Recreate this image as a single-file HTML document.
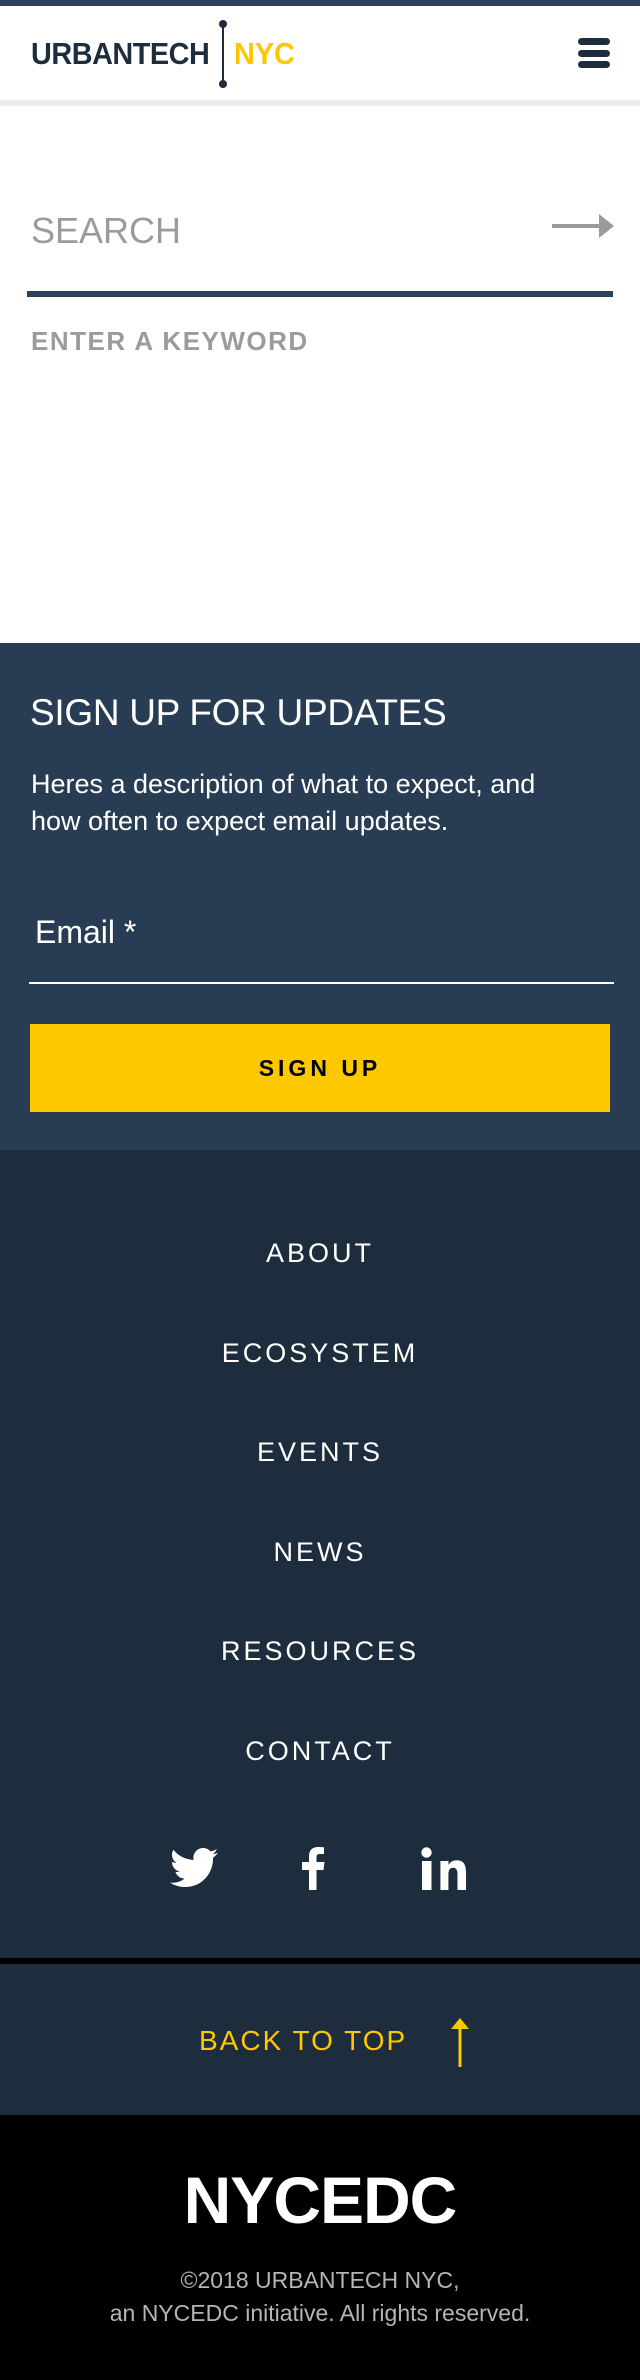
<!DOCTYPE html>
<html><head><meta charset="utf-8">
<style>
*{margin:0;padding:0;box-sizing:border-box}
body{width:640px;height:2380px;font-family:"Liberation Sans",sans-serif;background:#fff;position:relative;overflow:hidden}
.abs{position:absolute}
</style></head><body>
<div class="abs" style="left:0;top:0;width:640px;height:6px;background:#2a4158"></div>
<div class="abs" style="left:0;top:100px;width:640px;height:6px;background:#ebecee"></div>
<div class="abs" style="left:31px;top:36px;font-size:31px;font-weight:bold;color:#1d2d3d;letter-spacing:-0.5px;transform:scaleX(0.93);transform-origin:left">URBANTECH</div>
<div class="abs" style="left:222px;top:22px;width:2px;height:66px;background:#1d2d3d"></div>
<div class="abs" style="left:219px;top:20px;width:8px;height:8px;border-radius:50%;background:#1d2d3d"></div>
<div class="abs" style="left:219px;top:80px;width:8px;height:8px;border-radius:50%;background:#1d2d3d"></div>
<div class="abs" style="left:234px;top:36px;font-size:31px;font-weight:bold;color:#fdc800;transform:scaleX(0.93);transform-origin:left">NYC</div>
<div class="abs" style="left:578px;top:38px;width:32px;height:7px;border-radius:4px;background:#1d2d3d"></div>
<div class="abs" style="left:578px;top:50px;width:32px;height:7px;border-radius:4px;background:#1d2d3d"></div>
<div class="abs" style="left:578px;top:61px;width:32px;height:7px;border-radius:4px;background:#1d2d3d"></div>

<div class="abs" style="left:31px;top:210px;font-size:36px;color:#9b9b9b">SEARCH</div>
<svg class="abs" style="left:552px;top:212px" width="62" height="28"><line x1="0" y1="14" x2="50" y2="14" stroke="#9b9b9b" stroke-width="4"/><polygon points="47,2 62,14 47,26" fill="#9b9b9b"/></svg>
<div class="abs" style="left:27px;top:291px;width:586px;height:6px;background:#2a4158"></div>
<div class="abs" style="left:31px;top:326px;font-size:26px;font-weight:bold;color:#9b9b9b;letter-spacing:1.5px">ENTER A KEYWORD</div>

<div class="abs" style="left:0;top:643px;width:640px;height:507px;background:#283d54"></div>
<div class="abs" style="left:30px;top:692px;font-size:37px;color:#fff;letter-spacing:-0.3px">SIGN UP FOR UPDATES</div>
<div class="abs" style="left:31px;top:766px;width:540px;font-size:27px;line-height:37px;color:#fff">Heres a description of what to expect, and how often to expect email updates.</div>
<div class="abs" style="left:35px;top:914px;font-size:32px;color:#fff">Email *</div>
<div class="abs" style="left:29px;top:982px;width:585px;height:2px;background:#fff"></div>
<div class="abs" style="left:30px;top:1024px;width:580px;height:88px;background:#fdc800;text-align:center;line-height:88px;font-size:23px;font-weight:bold;letter-spacing:4px;color:#000">SIGN UP</div>

<div class="abs" style="left:0;top:1150px;width:640px;height:808px;background:#1d2d3d"></div>
<div class="abs" style="left:0;top:1235px;width:640px;text-align:center;color:#fff;font-size:27px;letter-spacing:3px">
<div style="height:99.6px;line-height:36px">ABOUT</div>
<div style="height:99.6px;line-height:36px">ECOSYSTEM</div>
<div style="height:99.6px;line-height:36px">EVENTS</div>
<div style="height:99.6px;line-height:36px">NEWS</div>
<div style="height:99.6px;line-height:36px">RESOURCES</div>
<div style="height:99.6px;line-height:36px">CONTACT</div>
</div>
<svg class="abs" style="left:170px;top:1848px" width="48" height="40" viewBox="0 0 24 20"><path fill="#fff" d="M24 2.4c-.9.4-1.8.6-2.8.8 1-.6 1.8-1.6 2.2-2.7-1 .6-2 1-3.1 1.2C19.3.6 18 0 16.6 0c-2.7 0-4.9 2.2-4.9 4.9 0 .4 0 .8.1 1.1C7.7 5.8 4.1 3.9 1.7.9c-.4.7-.7 1.6-.7 2.5 0 1.7.9 3.2 2.2 4.1-.8 0-1.6-.2-2.2-.6v.1c0 2.4 1.7 4.4 3.9 4.8-.4.1-.8.2-1.3.2-.3 0-.6 0-.9-.1.6 2 2.4 3.4 4.6 3.4-1.7 1.3-3.8 2.1-6.1 2.1-.4 0-.8 0-1.2-.1C2.2 18.7 4.8 19.5 7.5 19.5c9.1 0 14-7.5 14-14v-.6c1-.7 1.8-1.6 2.5-2.5z"/></svg>
<svg class="abs" style="left:302px;top:1847px" width="25" height="43" viewBox="0 0 25 43"><path fill="#fff" d="M7 43V23H0v-8h7V9c0-6 3.5-9 9-9 2.5 0 5 .2 6 .3V7h-4c-3 0-3.5 1.4-3.5 3.5V15h8l-1 8h-7v20z"/></svg>
<svg class="abs" style="left:421px;top:1847px" width="50" height="43" viewBox="0 0 50 43"><circle cx="5.5" cy="5.5" r="5.2" fill="#fff"/><rect x="1" y="14" width="9.5" height="29" fill="#fff"/><path fill="#fff" d="M16 14h9v4c1.5-2.6 4.5-4.8 9-4.8 9 0 10.5 5.8 10.5 13.5V43H35V28.5c0-3.4-.1-7.7-4.7-7.7-4.7 0-5.4 3.6-5.4 7.5V43H16z" transform="translate(5,0) scale(0.9,1)"/></svg>
<div class="abs" style="left:0;top:1958px;width:640px;height:6px;background:#000"></div>
<div class="abs" style="left:0;top:1964px;width:640px;height:151px;background:#1d2d3d"></div>
<div class="abs" style="left:199px;top:2025px;font-size:28px;letter-spacing:2px;color:#fdc800">BACK TO TOP</div>
<svg class="abs" style="left:449px;top:2017px" width="22" height="50"><line x1="11" y1="8" x2="11" y2="50" stroke="#fdc800" stroke-width="3"/><polygon points="2,12 11,1 20,12" fill="#fdc800"/></svg>
<div class="abs" style="left:0;top:2115px;width:640px;height:265px;background:#000"></div>
<div class="abs" style="left:0;top:2165px;width:640px;text-align:center;font-size:66px;font-weight:bold;color:#fff;letter-spacing:-1px;line-height:70px">NYCEDC</div>
<div class="abs" style="left:0;top:2264px;width:640px;text-align:center;font-size:23px;line-height:33px;color:#b5b5b5">©2018 URBANTECH NYC,<br>an NYCEDC initiative. All rights reserved.</div>
</body></html>
